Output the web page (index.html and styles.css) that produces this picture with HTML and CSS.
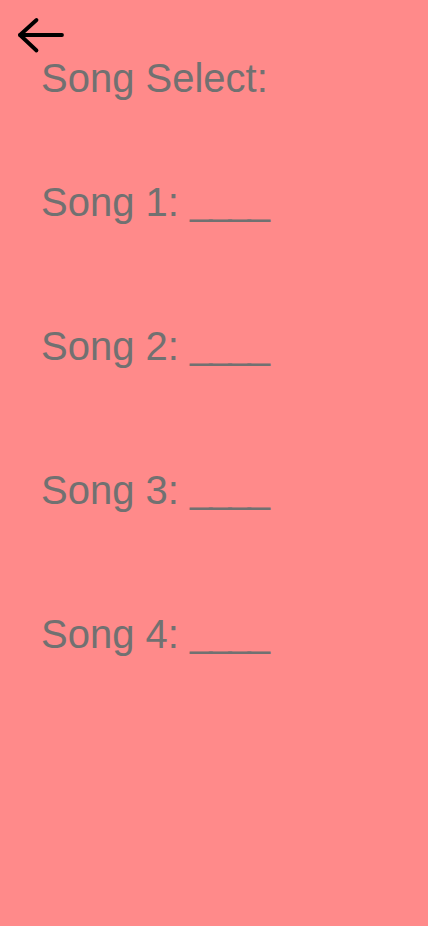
FILE: index.html
```html
<!DOCTYPE html>
<html lang="en">
<head>
<meta charset="utf-8">
<title>Song Select</title>
<link rel="stylesheet" href="styles.css">
</head>
<body>
<div class="screen">
  <header class="topbar">
    <button class="back" aria-label="Back">
      <svg width="48" height="38" viewBox="0 0 48 38" fill="none" stroke="#000" stroke-width="3.8" stroke-linecap="round" stroke-linejoin="round">
        <path d="M45 18H3"/>
        <path d="M19.5 3L3 18L19.5 33.5"/>
      </svg>
    </button>
  </header>
  <main class="content">
    <h1 class="title">Song Select:</h1>
    <ul class="songs">
      <li class="song">Song 1: <span class="blank">____</span></li>
      <li class="song">Song 2: <span class="blank">____</span></li>
      <li class="song">Song 3: <span class="blank">____</span></li>
      <li class="song">Song 4: <span class="blank">____</span></li>
    </ul>
  </main>
</div>
</body>
</html>
```

FILE: styles.css
```css
html, body {
  margin: 0;
  padding: 0;
  background: #ff8a8a;
}
.screen {
  width: 428px;
  min-height: 926px;
  background: #ff8a8a;
  font-family: "Liberation Sans", Arial, sans-serif;
  color: #717171;
}
.topbar {
  height: 55px;
  padding: 17px 0 0 17px;
  box-sizing: border-box;
}
.back {
  display: block;
  padding: 0;
  margin: 0;
  border: 0;
  background: none;
  cursor: pointer;
}
.back svg {
  display: block;
}
.content {
  padding-left: 41px;
}
.title {
  margin: 0;
  font-size: 40px;
  font-weight: normal;
  line-height: 46px;
}
.songs {
  list-style: none;
  margin: 78px 0 0;
  padding: 0;
  display: flex;
  flex-direction: column;
  gap: 98px;
}
.song {
  font-size: 40px;
  line-height: 46px;
  height: 46px;
}
.blank {
  letter-spacing: -3px;
  line-height: 0;
  vertical-align: 2px;
}
```
